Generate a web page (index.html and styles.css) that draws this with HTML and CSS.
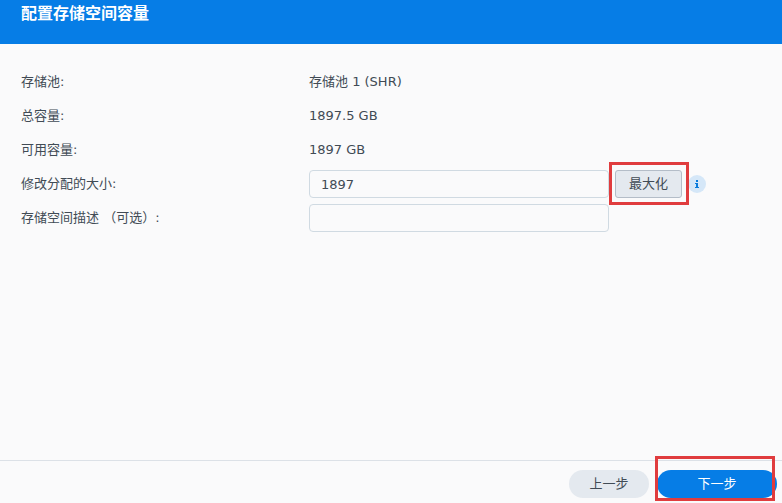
FILE: index.html
```html
<!DOCTYPE html>
<html lang="zh-CN">
<head>
    <meta charset="UTF-8">
    <meta name="viewport" content="width=device-width, initial-scale=1.0">
    <title>配置存储空间容量</title>
    <link rel="stylesheet" href="styles.css">
</head>
<body>
    <form class="wizard">
        <header class="wizard-header">
            <h1>配置存储空间容量</h1>
        </header>

        <main class="wizard-body">
            <div class="row">
                <span class="row-label">存储池:</span>
                <span>存储池 1 (SHR)</span>
            </div>
            <div class="row">
                <span class="row-label">总容量:</span>
                <span>1897.5 GB</span>
            </div>
            <div class="row">
                <span class="row-label">可用容量:</span>
                <span>1897 GB</span>
            </div>
            <div class="row">
                <label class="row-label" for="size">修改分配的大小:</label>
                <div class="field">
                    <input type="text" id="size" name="size" value="1897">
                    <span class="highlight highlight-max">
                        <button type="button" class="btn-max">最大化</button>
                    </span>
                    <svg class="info" viewBox="0 0 18 18" role="img" aria-label="信息">
                        <circle cx="9" cy="9" r="9" fill="#d5e7f8"/>
                        <path d="M8 5h2v2H8zM7 8h3v4h1v1H7v-1h1V9H7z" fill="#0a7bdc"/>
                    </svg>
                </div>
            </div>
            <div class="row">
                <label class="row-label" for="description">存储空间描述 （可选）:</label>
                <div class="field">
                    <input type="text" id="description" name="description">
                </div>
            </div>
        </main>

        <footer class="wizard-footer">
            <button type="button" class="btn">上一步</button>
            <span class="highlight highlight-next">
                <button type="submit" class="btn btn-primary">下一步</button>
            </span>
        </footer>
    </form>
</body>
</html>
```
FILE: styles.css
```css
:root {
    --primary-color: #067de6;
    --text-color: #414b55;
    --border-color: #d0dae2;
    --mark-color: #e03c3e;
}

* {
    box-sizing: border-box;
    margin: 0;
    padding: 0;
}

body {
    font-family: "DejaVu Sans", "Noto Sans CJK SC", sans-serif;
    font-size: 13px;
    line-height: 20px;
    color: var(--text-color);
    background: #fafafb;
}

.wizard {
    display: flex;
    flex-direction: column;
    min-height: 100vh;
}

.wizard-header {
    padding: 0 21px 20px;
    background: var(--primary-color);
    color: #fff;
}

.wizard-header h1 {
    font-family: "Noto Sans CJK SC", sans-serif;
    font-size: 16px;
    line-height: 24px;
    font-weight: 700;
}

.wizard-body {
    flex: 1;
    display: flex;
    flex-direction: column;
    gap: 6px;
    padding: 24px 21px;
}

.row {
    display: flex;
    align-items: center;
    min-height: 28px;
}

.row-label {
    flex: 0 0 288px;
}

.field {
    display: flex;
    align-items: center;
    gap: 6px;
}

input {
    width: 300px;
    height: 28px;
    padding: 0 11px;
    font: inherit;
    color: inherit;
    background: transparent;
    border: 1px solid var(--border-color);
    border-radius: 4px;
}

button {
    display: block;
    height: 28px;
    font: inherit;
    color: inherit;
    background: #e4e9ef;
    cursor: pointer;
}

.btn-max {
    padding: 0 13px;
    border: 1px solid #b4bdc8;
    border-radius: 3px;
}

.info {
    width: 18px;
    height: 18px;
}

.wizard-footer {
    display: flex;
    justify-content: flex-end;
    gap: 8px;
    padding: 9px 5px 5px;
    border-top: 1px solid #dce1e7;
}

.btn {
    min-width: 80px;
    border: none;
    border-radius: 14px;
}

.btn-primary {
    min-width: 120px;
    background: var(--primary-color);
    color: #fff;
}

/* Red frames over the buttons to press */
.highlight {
    position: relative;
}

.highlight::after {
    content: "";
    position: absolute;
    border: 3px solid var(--mark-color);
    pointer-events: none;
}

.highlight-max::after {
    inset: -8px -7px -7px -6px;
}

.highlight-next::after {
    inset: -14px 2px -3px -2px;
}
```
